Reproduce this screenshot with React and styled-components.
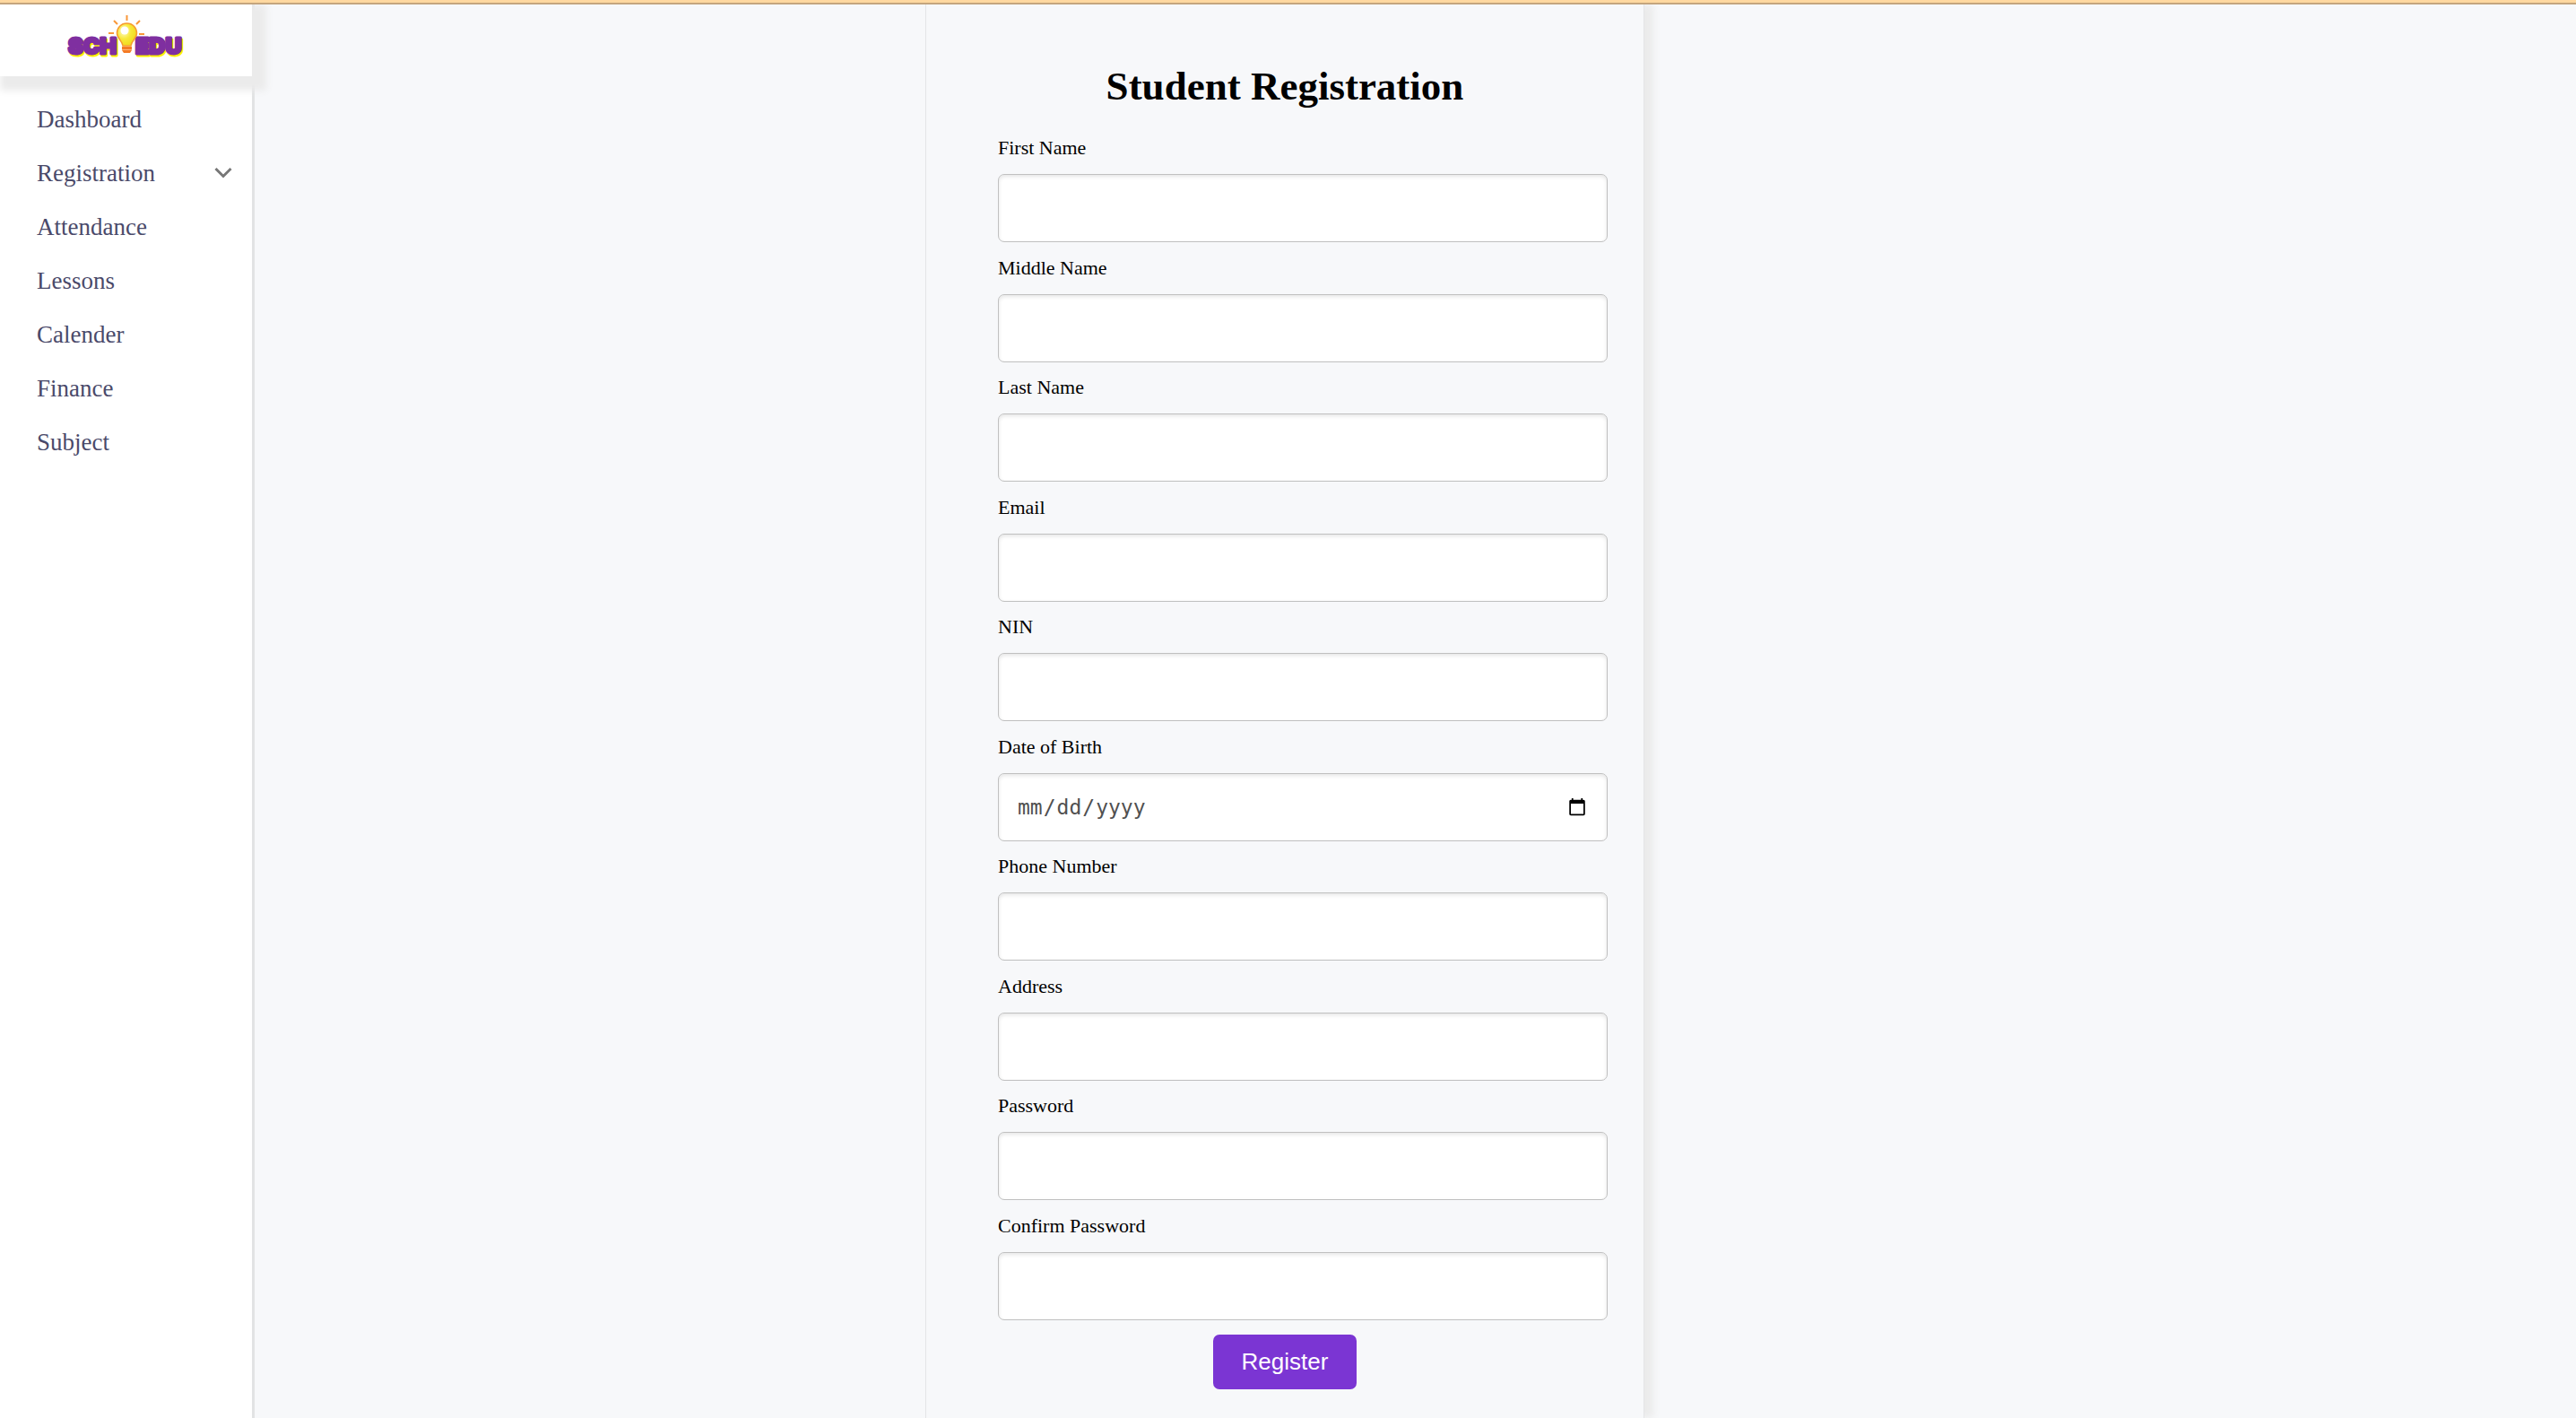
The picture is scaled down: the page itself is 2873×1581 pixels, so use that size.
import React from "react";
import styled, { createGlobalStyle } from "styled-components";

const Global = createGlobalStyle`
  *, *::before, *::after { box-sizing: border-box; }
  body {
    margin: 0;
    background: #f7f8fa;
    color: #000;
    font-family: "Liberation Serif", "Times New Roman", serif;
  }
`;

const Page = styled.div`
  display: flex;
  flex-direction: column;
  min-height: 100vh;
`;

const TopStrip = styled.div`
  height: 5px;
  background: #ffd8a0;
  border-bottom: 2px solid #c4a57e;
  position: relative;
  z-index: 2;
`;

const Body = styled.div`
  flex: 1;
  display: flex;
`;

const Sidebar = styled.aside`
  width: 284px;
  flex: none;
  background: #fff;
  border-right: 3px solid #e2e3e4;
`;

const Brand = styled.a`
  display: flex;
  justify-content: center;
  height: 80px;
  padding-top: 12px;
  background: #fff;
  box-shadow: 8px 8px 8px 8px #ebebeb;
`;

const Menu = styled.nav`
  display: flex;
  flex-direction: column;
  padding: 18px 22px 0 41px;
`;

const MenuLink = styled.a`
  display: flex;
  align-items: center;
  justify-content: space-between;
  height: 60px;
  font-size: 27px;
  line-height: 30px;
  color: #4a4a6a;
  text-decoration: none;
`;

const Main = styled.main`
  flex: 1;
  display: flex;
  justify-content: center;
  padding-right: 291px;
`;

const Form = styled.form`
  width: 802px;
  display: flex;
  flex-direction: column;
  align-items: center;
  padding: 65px 40px 32px 80px;
  border: 1px solid #e4e5e7;
  border-width: 0 1px;
  box-shadow: 10px 0 8px #ebebeb;
`;

const Title = styled.h1`
  margin: 0 40px 27px 0;
  font-size: 45px;
  line-height: 52px;
`;

const Fields = styled.div`
  flex: 1;
  width: 100%;
  display: flex;
  flex-direction: column;
  justify-content: space-between;
`;

const Field = styled.div`
  display: flex;
  flex-direction: column;
  gap: 13px;
`;

const Label = styled.label`
  font-size: 22px;
  line-height: 32px;
`;

const Input = styled.input`
  width: 100%;
  height: 76px;
  padding: 0 22px 0 20px;
  border: 1px solid #c0c0c0;
  border-radius: 7px;
  background: #fff;
  box-shadow: inset 0 2px 4px rgba(0, 0, 0, 0.1);
  color: #505050;
  font-family: "DejaVu Sans Mono", monospace;
  font-size: 23px;
  outline: none;

  &::-webkit-calendar-picker-indicator {
    width: 22px;
    height: 22px;
    padding: 0;
  }
`;

const Register = styled.button`
  margin: 16px 40px 0 0;
  width: 160px;
  height: 61px;
  border: 0;
  border-radius: 7px;
  background: #7b35d3;
  color: #fff;
  font-family: "Liberation Sans", Arial, sans-serif;
  font-size: 26px;
`;

const LogoArt = styled.svg`
  display: block;
  width: 140px;
  height: 60px;
`;

const LogoText = styled.text`
  font-family: "Inter", sans-serif;
  font-weight: 900;
  font-size: 25px;
  stroke-width: 3px;
  stroke-linejoin: round;
`;

function Logo() {
  return (
    <LogoArt viewBox="-3 0 140 60" role="img" aria-label="SCH EDU">
      <defs>
        <radialGradient id="glow" cx="0.35" cy="0.35" r="0.7">
          <stop offset="0" stopColor="#fffbd0" />
          <stop offset="0.5" stopColor="#f7e83a" />
          <stop offset="1" stopColor="#efd81c" />
        </radialGradient>
      </defs>
      <g fill="#fff200" stroke="#fff200" transform="translate(1.5 1.5)" aria-hidden="true">
        <LogoText x="2" y="43">SCH</LogoText>
        <LogoText x="77" y="43">EDU</LogoText>
      </g>
      <g fill="#7f2fa0" stroke="#7f2fa0">
        <LogoText x="2" y="43">SCH</LogoText>
        <LogoText x="77" y="43">EDU</LogoText>
      </g>
      <g stroke="#f9983a" strokeWidth="2">
        <path d="M67.500 0v6M53 6l4 4M82 6l-4 4M47 20h6M81 21h6" />
      </g>
      <path d="M67.500 9c-6.500 0-11 5-11 11 0 5.500 5.500 8 6.500 14h9c1-6 6.500-8.500 6.500-14 0-6-4.500-11-11-11z" fill="url(#glow)" stroke="#f79a2c" strokeWidth="1.500" />
      <circle cx="65" cy="17" r="4.500" fill="#fff" />
      <path d="M62 35h11v4l-2 3h-7l-2-3z" fill="#f47a25" />
      <path d="M62 38.500h11" stroke="#ffc48c" strokeWidth="0.800" />
    </LogoArt>
  );
}

const Chevron = styled.svg`
  width: 20px;
  height: 14px;
  fill: none;
  stroke: #777;
  stroke-width: 3;
`;

const menu = ["Dashboard", "Registration", "Attendance", "Lessons", "Calender", "Finance", "Subject"];

const fields = [
  ["First Name", "text"],
  ["Middle Name", "text"],
  ["Last Name", "text"],
  ["Email", "email"],
  ["NIN", "text"],
  ["Date of Birth", "date"],
  ["Phone Number", "tel"],
  ["Address", "text"],
  ["Password", "password"],
  ["Confirm Password", "password"],
];

export default function App() {
  return (
    <Page>
      <Global />
      <TopStrip />
      <Body>
        <Sidebar>
          <Brand href="#home">
            <Logo />
          </Brand>
          <Menu>
            {menu.map((name) => (
              <MenuLink key={name} href={"#" + name.toLowerCase()}>
                {name}
                {name === "Registration" && (
                  <Chevron viewBox="0 0 20 14" aria-hidden="true">
                    <path d="M1.500 2L10 10.500L18.500 2" />
                  </Chevron>
                )}
              </MenuLink>
            ))}
          </Menu>
        </Sidebar>
        <Main>
          <Form onSubmit={(e) => e.preventDefault()}>
            <Title>Student Registration</Title>
            <Fields>
              {fields.map(([name, type]) => {
                const id = name.toLowerCase().replace(/ /g, "-");
                return (
                  <Field key={id}>
                    <Label htmlFor={id}>{name}</Label>
                    <Input id={id} name={id} type={type} />
                  </Field>
                );
              })}
            </Fields>
            <Register type="submit">Register</Register>
          </Form>
        </Main>
      </Body>
    </Page>
  );
}
